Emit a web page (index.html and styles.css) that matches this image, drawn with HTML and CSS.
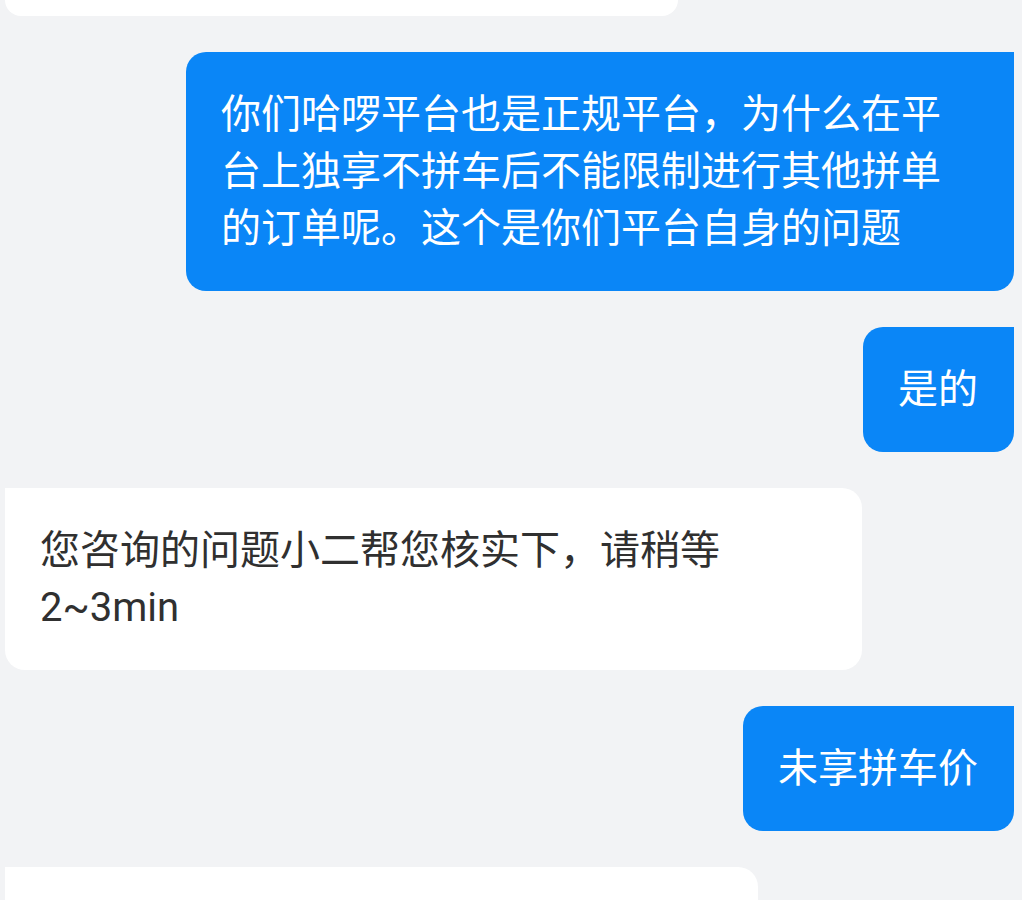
FILE: index.html
```html
<!DOCTYPE html>
<html lang="zh-CN">
<head>
    <meta charset="UTF-8">
    <meta name="viewport" content="width=device-width, initial-scale=1.0">
    <title>客服对话</title>
    <link rel="stylesheet" href="styles.css">
</head>
<body>

    <div id="chat">
        <!-- previous message, mostly scrolled out of view -->
        <div class="row row-in">
            <div class="bubble bubble-in bubble-cut-top"></div>
        </div>

        <div class="row row-out">
            <div class="bubble bubble-out">你们哈啰平台也是正规平台，为什么在平台上独享不拼车后不能限制进行其他拼单的订单呢。这个是你们平台自身的问题</div>
        </div>

        <div class="row row-out">
            <div class="bubble bubble-out">是的</div>
        </div>

        <div class="row row-in">
            <div class="bubble bubble-in">您咨询的问题小二帮您核实下，请稍等2~3min</div>
        </div>

        <div class="row row-out">
            <div class="bubble bubble-out">未享拼车价</div>
        </div>

        <!-- next message, cut off by the bottom of the screen -->
        <div class="row row-in">
            <div class="bubble bubble-in bubble-cut-bottom"></div>
        </div>
    </div>

</body>
</html>
```

FILE: styles.css
```css
html, body {
    margin: 0;
    padding: 0;
    background-color: #f2f3f5;
}
body {
    font-family: Roboto, "Noto Sans CJK SC", sans-serif;
    height: 900px;
    overflow: hidden;
}
#chat {
    display: flex;
    flex-direction: column;
    gap: 36px;
    padding: 0 8px 0 5px;
}
.row { display: flex; }
.row-out { justify-content: flex-end; }
.row-in { justify-content: flex-start; }

.bubble {
    font-size: 40px;
    line-height: 57px;
    padding: 34px 35px;
    border-radius: 20px;
    word-break: break-all;
    box-sizing: border-box;
}
.bubble-out {
    background-color: #0a86f7;
    color: #ffffff;
    border-top-right-radius: 0;
    max-width: 828px;
    padding-right: 36px;
}
.bubble-in {
    background-color: #ffffff;
    color: #303030;
    border-top-left-radius: 0;
    max-width: 857px;
    word-break: normal;
}
.bubble-cut-top {
    width: 673px;
    height: 16px;
    padding: 0;
    border-radius: 0 0 20px 20px;
}
.bubble-cut-bottom {
    width: 753px;
    height: 40px;
    padding: 0;
    border-radius: 0 20px 0 0;
}
```
